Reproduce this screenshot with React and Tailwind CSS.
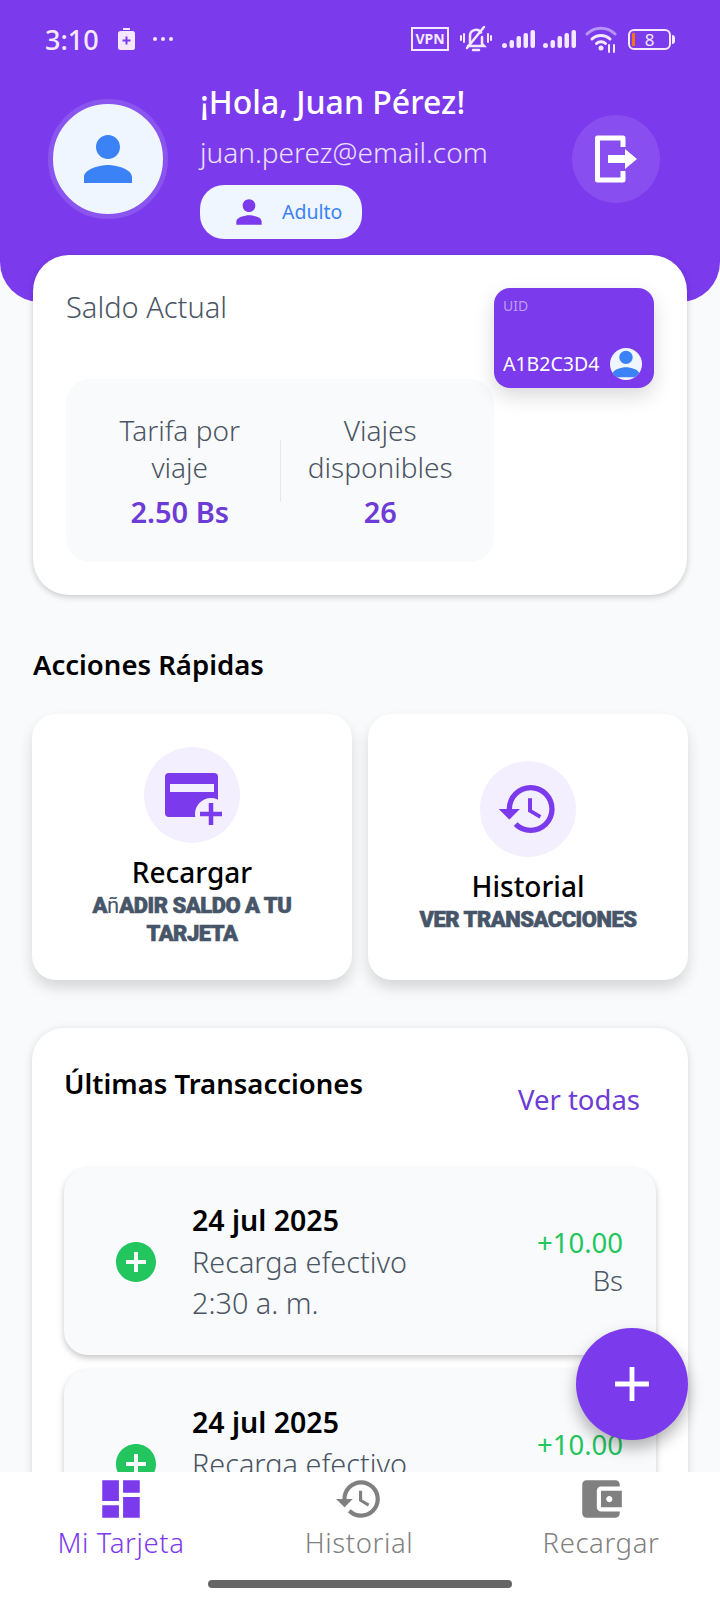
import React from 'react';
import { MdPerson, MdHistory, MdAddCircle, MdAdd, MdDashboard, MdAccountBalanceWallet } from 'react-icons/md';

const Signal = () => (
  <svg width="34" height="20" viewBox="0 0 34 20" fill="#f3e8ff">
    <rect x="0" y="14" width="5" height="5" rx="2.5" />
    <rect x="7.5" y="11" width="4.5" height="8" rx="2" />
    <rect x="14.5" y="7" width="4.5" height="12" rx="2" />
    <rect x="21.5" y="4" width="4.5" height="15" rx="2" />
    <rect x="28.5" y="1" width="4.5" height="18" rx="2" />
  </svg>
);

const StatusBar = () => (
  <div className="h-[34px] pl-[45px] pr-[45px] flex items-center text-[#f3e8ff]">
    <span className="text-[27px] font-medium leading-none">3:10</span>
    <svg className="ml-[19px]" width="17" height="22" viewBox="0 0 17 22">
      <rect x="5" y="0" width="7" height="2" fill="#f3e8ff" />
      <rect x="0" y="3" width="17" height="19" rx="2.5" fill="#f3e8ff" />
      <path d="M8.5 8.5v8M4.5 12.5h8" stroke="#7c3aed" strokeWidth="2" />
    </svg>
    <div className="ml-[18px] flex gap-[4px]">
      <span className="size-[4px] rounded-full bg-[#f3e8ff]" />
      <span className="size-[4px] rounded-full bg-[#f3e8ff]" />
      <span className="size-[4px] rounded-full bg-[#f3e8ff]" />
    </div>
    <div className="ml-auto flex items-center">
      <span className="w-[38px] h-[24px] border-[2.5px] border-[#f3e8ff] flex items-center justify-center text-[14px] font-bold leading-none">VPN</span>
      <svg className="ml-[11px]" width="32" height="28" viewBox="0 0 32 28" fill="none" stroke="#f3e8ff" strokeWidth="2.5" strokeLinecap="round">
        <path d="M10 19V11a6 6 0 0 1 11-3.5M22 12v7l2 2H8" />
        <path d="M13 25h6" />
        <path d="M7 23 24 2" />
        <path d="M4 9v8M1 11v4M28 9v8M31 11v4" strokeWidth="2" />
      </svg>
      <span className="ml-[10px]"><Signal /></span>
      <span className="ml-[7px]"><Signal /></span>
      <svg className="ml-[8px]" width="32" height="28" viewBox="0 0 32 28" fill="none" strokeLinecap="round">
        <path d="M2 9a20 20 0 0 1 28 0" stroke="#b794f6" strokeWidth="3" />
        <path d="M7 14a13 13 0 0 1 18 0" stroke="#f3e8ff" strokeWidth="3" />
        <path d="M11.5 18.5a6.5 6.5 0 0 1 9 0" stroke="#f3e8ff" strokeWidth="3" />
        <circle cx="16" cy="23" r="2.5" fill="#f3e8ff" />
        <path d="M24 20v7M29 20v7" stroke="#f3e8ff" strokeWidth="2" />
      </svg>
      <div className="ml-[11px] flex items-center">
        <div className="relative w-[43px] h-[21px] border-2 border-[#f3e8ff] rounded-[6px] flex items-center justify-center text-[17px] leading-none">
          <span className="absolute left-[2px] top-[2px] bottom-[2px] w-[3px] bg-[#f97316]" />
          8
        </div>
        <span className="ml-[1px] w-[3px] h-[9px] rounded-r-full bg-[#f3e8ff]" />
      </div>
    </div>
  </div>
);

const Header = () => (
  <div className="h-[302px] pt-[22px] bg-[#7c3aed] rounded-b-[40px]">
    <StatusBar />
    <div className="mt-[27px] pl-[48px] pr-[60px] flex items-start">
      <div className="mt-[16px] size-[120px] rounded-full bg-[#eff6ff] border-[5px] border-[#8a55ef] flex items-center justify-center text-[#3b82f6]">
        <MdPerson size={72} />
      </div>
      <div className="ml-[32px] flex flex-col items-start">
        <div className="text-[32px] leading-[38px] font-medium text-white">¡Hola, Juan Pérez!</div>
        <div className="mt-[13px] text-[28px] leading-[36px] font-light text-white/85">juan.perez@email.com</div>
        <div className="mt-[15px] w-[162px] h-[54px] rounded-[24px] bg-[#eff6ff] flex items-center pl-[30px]">
          <MdPerson size={38} className="text-[#7c3aed]" />
          <span className="ml-[14px] text-[19.5px] text-[#3b82f6]">Adulto</span>
        </div>
      </div>
      <button className="ml-auto mt-[32px] size-[88px] rounded-full bg-white/10 flex items-center justify-center">
        <svg width="42" height="48" viewBox="0 0 42 48" fill="none">
          <path d="M28 12V3H2.5v42H28v-9" stroke="#fff" strokeWidth="5" strokeLinejoin="round" />
          <path d="M13 20h17v-6l12 10-12 10v-6H13z" fill="#fff" />
        </svg>
      </button>
    </div>
  </div>
);

const Stat = ({ label, value }) => (
  <div className="flex-1 text-center">
    <div className="text-[28px] leading-[37px] font-light text-[#4b5563] px-[14px]">{label}</div>
    <div className="mt-[8px] text-[29px] leading-[36px] font-semibold text-[#6d3bd6]">{value}</div>
  </div>
);

const BalanceCard = () => (
  <div className="relative bg-white rounded-[36px] h-[340px] p-[33px] flex items-start shadow-[0_2px_6px_rgba(0,0,0,0.2)]">
    <div className="w-[428px]">
      <div className="text-[29px] leading-[38px] font-light text-[#4b5563]">Saldo Actual</div>
      <div className="mt-[53px] h-[183px] rounded-[24px] bg-[#f9fafb] flex items-center px-[14px]">
        <Stat label="Tarifa por viaje" value="2.50 Bs" />
        <div className="w-[1px] h-[62px] bg-[#e5e7eb]" />
        <Stat label="Viajes disponibles" value="26" />
      </div>
    </div>
    <div className="w-[160px] h-[100px] rounded-[16px] bg-[#7c3aed] px-[9px] py-[8px] flex flex-col justify-between shadow-[0_8px_20px_rgba(0,0,0,0.15)]">
      <div className="text-[14px] leading-[20px] text-white/50">UID</div>
      <div className="flex items-center">
        <span className="text-[19.5px] leading-[32px] text-white">A1B2C3D4</span>
        <span className="ml-auto mr-[3px] size-[32px] rounded-full bg-[#eff6ff] overflow-hidden flex items-center justify-center text-[#3b82f6]">
          <MdPerson size={40} className="shrink-0" />
        </span>
      </div>
    </div>
  </div>
);

const ActionCard = ({ icon, title, children }) => (
  <div className="bg-white rounded-[24px] h-[266px] flex flex-col items-center justify-center shadow-[0_8px_14px_rgba(0,0,0,0.14)]">
    <div className="size-[96px] rounded-full bg-[#f3effe] flex items-center justify-center text-[#7c3aed]">{icon}</div>
    <div className="mt-[9px] text-[28px] leading-[40px] font-medium text-black">{title}</div>
    <div className="w-[250px] text-center text-[22px] leading-[28px] font-black tracking-[-0.5px] uppercase text-[#475569] font-['Roboto',sans-serif] [-webkit-text-stroke:0.6px_#475569]">{children}</div>
  </div>
);

const AddCardIcon = () => (
  <svg width="64" height="64" viewBox="-5 -10 64 64">
    <rect x="0" y="0" width="53" height="44" rx="4" fill="#7c3aed" />
    <rect x="5" y="11" width="44" height="8" fill="#f3effe" />
    <circle cx="46" cy="41" r="16" fill="#f3effe" />
    <path d="M46 30v22M35 41h22" stroke="#7c3aed" strokeWidth="4.5" fill="none" />
  </svg>
);

const TxCard = () => (
  <div className="h-[187px] rounded-[24px] bg-[#f8fafc] flex items-center pl-[48px] pr-[33px] shadow-[0_3px_6px_rgba(0,0,0,0.22)]">
    <MdAddCircle size={48} className="text-[#22c55e]" />
    <div className="ml-[32px] flex-1">
      <div className="text-[28.5px] leading-[41px] font-semibold text-black">24 jul 2025</div>
      <div className="text-[28.8px] leading-[41px] font-light text-[#4b5563]">Recarga efectivo</div>
      <div className="text-[28.8px] leading-[41px] font-light text-[#4b5563]">2:30 a. m.</div>
    </div>
    <div className="w-[90px] text-right text-[27.5px] leading-[38px] font-light text-[#4b5563]">
      <span className="font-normal text-[#22c55e]">+10.00</span> Bs
    </div>
  </div>
);

const NavItem = ({ icon, label, active, className }) => (
  <div className={`shrink-0 flex flex-col items-center ${active ? 'text-[#7c3aed]' : 'text-[#808080]'} ${className}`}>
    {icon}
    <span className="mt-[1px] text-[27.5px] leading-[36px] font-light tracking-[0.6px]">{label}</span>
  </div>
);

export default function App() {
  return (
    <div className="relative w-[720px] h-[1600px] overflow-hidden bg-[#f8fafc] font-['Noto_Sans',sans-serif]">
      <Header />
      <div className="px-[33px] -mt-[47px]">
        <BalanceCard />
        <div className="mt-[50px] text-[27.5px] leading-[40px] font-semibold text-black">Acciones Rápidas</div>
        <div className="mt-[29px] grid grid-cols-2 gap-[16px] -mx-[1px]">
          <ActionCard icon={<AddCardIcon />} title="Recargar">
            A<span className="normal-case font-normal tracking-normal [-webkit-text-stroke:0]">ñ</span>adir saldo a tu tarjeta
          </ActionCard>
          <ActionCard icon={<MdHistory size={64} />} title="Historial">Ver transacciones</ActionCard>
        </div>
        <div className="mt-[48px] -mx-[1px] bg-white rounded-[32px] px-[32px] pb-[32px] shadow-[0_2px_8px_rgba(0,0,0,0.15)]">
          <div className="h-[140px] flex items-start justify-between">
            <div className="mt-[36px] text-[27.5px] leading-[40px] font-semibold text-black">Últimas Transacciones</div>
            <div className="mt-[52px] mr-[16px] text-[27.5px] leading-[40px] text-[#6d3bd6]">Ver todas</div>
          </div>
          <div className="flex flex-col gap-[15px]">
            <TxCard />
            <TxCard />
          </div>
        </div>
      </div>
      {/* fab sits over the list */}
      <button className="absolute left-[576px] top-[1328px] size-[112px] rounded-full bg-[#7c3aed] flex items-center justify-center text-white shadow-[0_8px_16px_rgba(0,0,0,0.3)]">
        <MdAdd size={58} />
      </button>
      <div className="absolute left-0 right-0 bottom-0 h-[128px] bg-white">
        <div className="relative flex pt-[2px]">
          <NavItem className="w-[242px]" active label="Mi Tarjeta" icon={<MdDashboard size={50} />} />
          <NavItem className="w-[234px]" label="Historial" icon={<MdHistory size={50} />} />
          <NavItem className="w-[250px]" label="Recargar" icon={<MdAccountBalanceWallet size={50} />} />
        </div>
        <div className="absolute left-[208px] bottom-[12px] w-[304px] h-[8px] rounded-full bg-[#666]" />
      </div>
    </div>
  );
}
